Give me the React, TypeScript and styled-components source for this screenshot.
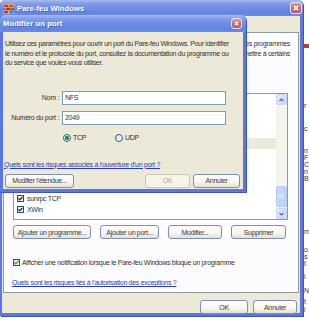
import React from "react";
import styled, { createGlobalStyle } from "styled-components";

const GlobalStyle = createGlobalStyle`
  html, body { margin: 0; padding: 0; background: #ffffff; }
  body { font-family: "Liberation Sans", Arial, sans-serif; }
  * { box-sizing: border-box; }
`;

const Desktop = styled.div`
  position: relative;
  width: 309px;
  height: 320px;
  overflow: hidden;
  background: #ffffff;
`;

const BackPage = styled.div`
  position: absolute;
  left: 304px;
  top: 0;
  width: 5px;
  overflow: hidden;
  display: flex;
  flex-direction: column;
  font-size: 7px;
  color: #333;
`;

const BackLine = styled.div<{ $top: number }>`
  margin-top: ${(p) => p.$top}px;
  line-height: 7px;
  white-space: nowrap;
`;

const RedMark = styled.div`
  margin-top: 44px;
  width: 6px;
  height: 4px;
  background: #d8301c;
`;

const Window = styled.div<{ $x: number; $y: number; $w: number; $h: number }>`
  position: absolute;
  left: ${(p) => p.$x}px;
  top: ${(p) => p.$y}px;
  width: ${(p) => p.$w}px;
  height: ${(p) => p.$h}px;
  display: flex;
  flex-direction: column;
  background: #5d78d9;
  border-radius: 5px 5px 0 0;
  box-shadow: 1px 1px 0 #3d55b8;
`;

const TitleBar = styled.div<{ $h: number; $pr: number }>`
  flex: none;
  height: ${(p) => p.$h}px;
  display: flex;
  align-items: center;
  gap: 3px;
  padding: 0 ${(p) => p.$pr}px 0 3px;
  border-radius: 5px 5px 0 0;
  background: linear-gradient(
    180deg,
    #a9bef3 0%,
    #86a0e9 18%,
    #718fe3 45%,
    #6584df 80%,
    #6b8ae1 100%
  );
`;

const TitleText = styled.span`
  flex: 1;
  color: #ffffff;
  font-weight: bold;
  font-size: 7.6px;
  letter-spacing: 0.1px;
  text-shadow: 1px 1px 0 rgba(30, 50, 140, 0.4);
  white-space: nowrap;
`;

const CloseButton = styled.div<{ $size: number }>`
  flex: none;
  width: ${(p) => p.$size}px;
  height: ${(p) => p.$size}px;
  border: 1px solid #f2e8ec;
  border-radius: 3px;
  background: linear-gradient(180deg, #dc9aa3 0%, #c56b78 50%, #b4586a 100%);
  display: flex;
  align-items: center;
  justify-content: center;
`;

const WindowBody = styled.div<{ $l: number; $r: number }>`
  flex: 1;
  min-height: 0;
  margin: 0 ${(p) => p.$r}px 3px ${(p) => p.$l}px;
  background: #ece9d8;
  display: flex;
  flex-direction: column;
  color: #333333;
  font-size: 7px;
  letter-spacing: -0.3px;
`;

const TabStrip = styled.div`
  flex: none;
  height: 16px;
  display: flex;
  align-items: flex-end;
  padding-left: 3px;
`;

const Tab = styled.div<{ $active?: boolean }>`
  height: ${(p) => (p.$active ? 14 : 12)}px;
  padding: 0 6px;
  display: flex;
  align-items: center;
  border: 1px solid #919b9c;
  border-bottom: none;
  border-top: 2px solid ${(p) => (p.$active ? "#ffc83c" : "#919b9c")};
  background: ${(p) => (p.$active ? "#fcfcfe" : "#f4f3ee")};
  margin-bottom: ${(p) => (p.$active ? -1 : 0)}px;
`;

const Panel = styled.div`
  flex: none;
  height: 261px;
  margin: 0 1px;
  border: 1px solid #919b9c;
  background: #fcfcfe;
  padding: 6px 10px 0 9px;
  display: flex;
  flex-direction: column;
`;

const Paragraph = styled.div`
  line-height: 9.5px;
`;

const Line = styled.span<{ $end?: boolean }>`
  display: block;
  white-space: nowrap;
  text-align: ${(p) => (p.$end ? "right" : "left")};
  margin-right: ${(p) => (p.$end ? -2 : 0)}px;
`;

const Caption = styled.div`
  margin-top: 10px;
  line-height: 9.5px;
  margin-bottom: 6px;
`;

const ListBox = styled.div`
  height: 127px;
  border: 1px solid #7f9db9;
  background: #ffffff;
  display: flex;
`;

const Rows = styled.div`
  flex: 1;
  overflow: hidden;
`;

const Row = styled.div<{ $selected?: boolean }>`
  height: 11px;
  display: flex;
  align-items: center;
  gap: 3px;
  padding-left: 3px;
  white-space: nowrap;
  background: ${(p) => (p.$selected ? "#ece9d8" : "transparent")};
`;

const CheckBox = styled.span`
  flex: none;
  width: 7px;
  height: 7px;
  border: 1px solid #1c5180;
  background: linear-gradient(135deg, #dcdcd7 0%, #ffffff 80%);
  display: flex;
  align-items: center;
  justify-content: center;
`;

const ScrollBar = styled.div`
  flex: none;
  width: 11px;
  display: flex;
  flex-direction: column;
  background: #f4f3ee;
`;

const ScrollArrow = styled.div`
  flex: none;
  height: 11px;
  border: 1px solid #c6d5f8;
  border-radius: 2px;
  background: linear-gradient(135deg, #e3ebfd 0%, #c5d6fb 100%);
  display: flex;
  align-items: center;
  justify-content: center;
`;

const ScrollTrack = styled.div`
  flex: 1;
  display: flex;
  flex-direction: column;
`;

const Thumb = styled.div`
  flex: none;
  border: 1px solid #b8cbf6;
  border-radius: 2px;
  background: linear-gradient(90deg, #cadafc 0%, #bcd0fa 100%);
  display: flex;
  align-items: center;
  justify-content: center;
`;

const ButtonRow = styled.div<{ $top: number; $gap: number; $end?: boolean; $pr?: number }>`
  flex: none;
  margin-top: ${(p) => p.$top}px;
  display: flex;
  gap: ${(p) => p.$gap}px;
  justify-content: ${(p) => (p.$end ? "flex-end" : "flex-start")};
  padding-right: ${(p) => p.$pr ?? 0}px;
`;

const Button = styled.div<{ $w: number; $disabled?: boolean; $push?: boolean }>`
  flex: none;
  width: ${(p) => p.$w}px;
  height: 14px;
  margin-left: ${(p) => (p.$push ? "auto" : "0")};
  border: 1px solid ${(p) => (p.$disabled ? "#c9c7ba" : "#7d91b8")};
  border-radius: 3px;
  background: ${(p) =>
    p.$disabled
      ? "#f5f4ea"
      : "linear-gradient(180deg, #ffffff 0%, #f6f5f0 60%, #e3e1d7 100%)"};
  color: ${(p) => (p.$disabled ? "#aca899" : "#3a3a3a")};
  display: flex;
  align-items: center;
  justify-content: center;
  white-space: nowrap;
`;

const OptionRow = styled.div<{ $top: number }>`
  flex: none;
  margin-top: ${(p) => p.$top}px;
  height: 10px;
  display: flex;
  align-items: center;
  gap: 2px;
  white-space: nowrap;
`;

const Link = styled.div<{ $top: number }>`
  flex: none;
  margin-top: ${(p) => p.$top}px;
  margin-left: -1px;
  line-height: 10px;
  color: #2a3fb4;
  text-decoration: underline;
  white-space: nowrap;
`;

const DialogBody = styled.div`
  flex: 1;
  padding: 7px 3px 0 2px;
  display: flex;
  flex-direction: column;
`;

const FieldRow = styled.div<{ $top: number }>`
  flex: none;
  margin-top: ${(p) => p.$top}px;
  height: 14px;
  display: flex;
  align-items: center;
  gap: 3px;
`;

const FieldLabel = styled.span`
  width: 54px;
  text-align: right;
  white-space: nowrap;
`;

const TextInput = styled.div`
  width: 164px;
  height: 14px;
  border: 1px solid #7f9db9;
  background: #ffffff;
  padding-left: 2px;
  display: flex;
  align-items: center;
`;

const RadioRow = styled.div`
  flex: none;
  margin-top: 8px;
  height: 10px;
  display: flex;
  padding-left: 58px;
`;

const RadioItem = styled.label`
  width: 52px;
  display: flex;
  align-items: center;
  gap: 2px;
`;

const RadioDot = styled.span<{ $on?: boolean }>`
  flex: none;
  width: 8px;
  height: 8px;
  border-radius: 50%;
  border: 1px solid #2d5a8c;
  background: ${(p) =>
    p.$on
      ? "radial-gradient(circle, #2f8c2f 0 1.6px, #7cc47a 2.2px, #ffffff 2.6px)"
      : "linear-gradient(135deg, #dcdcd7 0%, #ffffff 80%)"};
`;

const Check = ({ color }: { color: string }) => (
  <svg width="5" height="5" viewBox="0 0 5 5">
    <polyline points="0.5,2.3 1.8,3.8 4.5,0.8" fill="none" stroke={color} strokeWidth="1.2" />
  </svg>
);

const CloseX = ({ s }: { s: number }) => (
  <svg width={s} height={s} viewBox="0 0 6 6">
    <path d="M0.8 0.8 L5.2 5.2 M5.2 0.8 L0.8 5.2" stroke="#ffffff" strokeWidth="1.4" />
  </svg>
);

const Arrow = ({ up }: { up?: boolean }) => (
  <svg width="5" height="4" viewBox="0 0 5 4">
    <polyline
      points={up ? "0.5,3.2 2.5,1 4.5,3.2" : "0.5,0.8 2.5,3 4.5,0.8"}
      fill="none"
      stroke="#4d6185"
      strokeWidth="1.1"
    />
  </svg>
);

const FirewallIcon = () => (
  <svg width="11" height="11" viewBox="0 0 11 11">
    <rect x="0" y="1" width="11" height="10" fill="#e9dcc4" />
    <rect x="0.5" y="1.5" width="4.5" height="2.5" fill="#b8452a" />
    <rect x="5.5" y="1.5" width="5" height="2.5" fill="#c9572e" />
    <rect x="0" y="4.5" width="2.5" height="2.5" fill="#c9572e" />
    <rect x="3" y="4.5" width="4.5" height="2.5" fill="#a83a22" />
    <rect x="8" y="4.5" width="3" height="2.5" fill="#b8452a" />
    <rect x="0.5" y="7.5" width="4.5" height="3" fill="#b8452a" />
    <rect x="5.5" y="7.5" width="5" height="3" fill="#d06a34" />
    <circle cx="8.5" cy="8.5" r="2.3" fill="#3c8fd0" />
    <path d="M7.2 8 Q8.5 7 9.8 8.6 Q8.6 10 7.4 9.2 Z" fill="#4caf3c" />
  </svg>
);

const programs = [
  "Assistance à distance",
  "Bureau à distance",
  "Infrastructure UPnP",
  "Partage de fichiers et d'imprimantes",
  "portmap TCP",
  "portmap UDP",
  "mountd TCP",
  "mountd UDP",
  "nfsd TCP",
  "sunrpc TCP",
  "XWin",
];

const backLines: { text: string; top: number }[] = [
  { text: "r", top: 54 },
  { text: "c", top: 16 },
  { text: "n", top: 15 },
  { text: "F", top: 0 },
  { text: "C", top: 0 },
  { text: "n", top: 0 },
  { text: "B", top: 0 },
  { text: "m", top: 46 },
  { text: "o", top: 11 },
  { text: "s", top: 0 },
  { text: "t", top: 0 },
  { text: "i", top: 6 },
  { text: "N", top: 7 },
  { text: "t", top: 4 },
  { text: "i", top: 1 },
];

const App = () => {
  return (
    <Desktop>
      <GlobalStyle />
      <BackPage>
        <RedMark />
        {backLines.map((l, i) => (
          <BackLine key={i} $top={l.top}>
            {l.text}
          </BackLine>
        ))}
      </BackPage>

      <Window $x={0} $y={0} $w={303} $h={316}>
        <TitleBar $h={16} $pr={1}>
          <FirewallIcon />
          <TitleText>Pare-feu Windows</TitleText>
          <CloseButton $size={12}>
            <CloseX s={6} />
          </CloseButton>
        </TitleBar>
        <WindowBody $l={2} $r={3}>
          <TabStrip>
            <Tab>Général</Tab>
            <Tab $active>Exceptions</Tab>
            <Tab>Avancé</Tab>
          </TabStrip>
          <Panel>
            <Paragraph>
              <Line $end>Le Pare-feu Windows bloque les connexions entrantes, sauf celles des programmes</Line>
              <Line $end>et services cochés ci-dessous. L'ajout d'exceptions peut permettre à certains</Line>
              <Line>programmes de mieux fonctionner.</Line>
            </Paragraph>
            <Caption>Programmes et services :</Caption>
            <ListBox>
              <Rows>
                {programs.map((name, i) => (
                  <Row key={name} $selected={i === 4}>
                    <CheckBox>
                      <Check color="#1e1e1e" />
                    </CheckBox>
                    {name}
                  </Row>
                ))}
              </Rows>
              <ScrollBar>
                <ScrollArrow>
                  <Arrow up />
                </ScrollArrow>
                <ScrollTrack>
                  <Thumb style={{ marginTop: 81, height: 21 }}>
                    <svg width="5" height="5" viewBox="0 0 5 5">
                      <path d="M0 1h5M0 2.5h5M0 4h5" stroke="#e8effe" strokeWidth="0.8" />
                    </svg>
                  </Thumb>
                </ScrollTrack>
                <ScrollArrow>
                  <Arrow />
                </ScrollArrow>
              </ScrollBar>
            </ListBox>
            <ButtonRow $top={5} $gap={9}>
              <Button $w={78}>Ajouter un programme...</Button>
              <Button $w={59}>Ajouter un port...</Button>
              <Button $w={54}>Modifier...</Button>
              <Button $w={55}>Supprimer</Button>
            </ButtonRow>
            <OptionRow $top={18}>
              <CheckBox>
                <Check color="#21a121" />
              </CheckBox>
              Afficher une notification lorsque le Pare-feu Windows bloque un programme
            </OptionRow>
            <Link $top={11}>Quels sont les risques liés à l'autorisation des exceptions ?</Link>
          </Panel>
          <ButtonRow $top={7} $gap={5} $end $pr={3}>
            <Button $w={48}>OK</Button>
            <Button $w={44}>Annuler</Button>
          </ButtonRow>
        </WindowBody>
      </Window>

      <Window $x={0} $y={15} $w={246} $h={177}>
        <TitleBar $h={17} $pr={4}>
          <TitleText>Modifier un port</TitleText>
          <CloseButton $size={11}>
            <CloseX s={5} />
          </CloseButton>
        </TitleBar>
        <WindowBody $l={3} $r={3}>
          <DialogBody>
            <Paragraph>
              <Line>Utilisez ces paramètres pour ouvrir un port du Pare-feu Windows. Pour identifier</Line>
              <Line>le numéro et le protocole du port, consultez la documentation du programme ou</Line>
              <Line>du service que voulez-vous utiliser.</Line>
            </Paragraph>
            <FieldRow $top={23}>
              <FieldLabel>Nom :</FieldLabel>
              <TextInput>NFS</TextInput>
            </FieldRow>
            <FieldRow $top={6}>
              <FieldLabel>Numéro du port :</FieldLabel>
              <TextInput>2049</TextInput>
            </FieldRow>
            <RadioRow>
              <RadioItem>
                <RadioDot $on />
                TCP
              </RadioItem>
              <RadioItem>
                <RadioDot />
                UDP
              </RadioItem>
            </RadioRow>
            <Link $top={17}>Quels sont les risques associés à l'ouverture d'un port ?</Link>
            <ButtonRow $top={4} $gap={3}>
              <Button $w={69}>Modifier l'étendue...</Button>
              <Button $w={45} $disabled $push>
                OK
              </Button>
              <Button $w={47}>Annuler</Button>
            </ButtonRow>
          </DialogBody>
        </WindowBody>
      </Window>
    </Desktop>
  );
};

export default App;
